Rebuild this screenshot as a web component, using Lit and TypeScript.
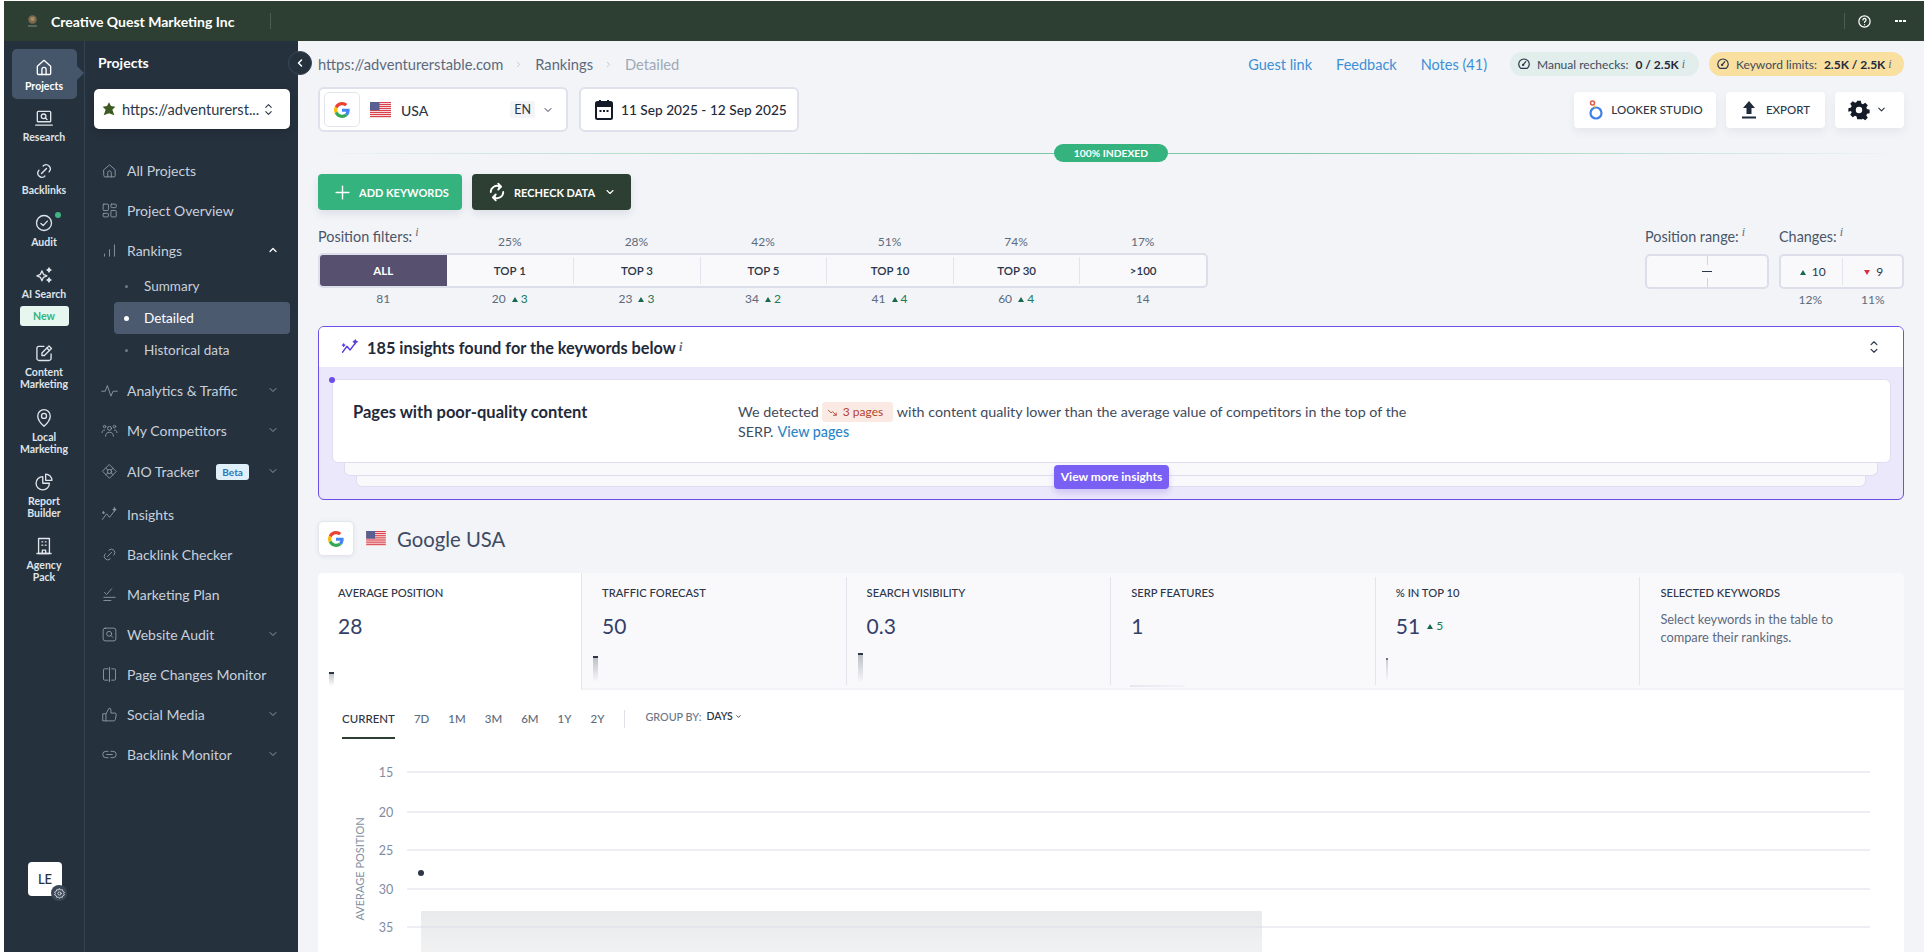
import { LitElement, html, css, svg } from "lit";
import { customElement } from "lit/decorators.js";

const P: Record<string, any> = {
  home: svg`<path d="M4 11l8-7 8 7v8.500a1.500 1.500 0 0 1-1.500 1.500H5.500A1.500 1.500 0 0 1 4 19.500z"/><path d="M9.500 21v-6a2.500 2.500 0 0 1 5 0v6"/>`,
  research: svg`<rect x="4" y="4" width="16" height="12.500" rx="1"/><path d="M2 20.500h20"/><circle cx="11.500" cy="10" r="2.800"/><path d="M13.600 12l2 1.800"/>`,
  link: svg`<path d="M9 15l6-6"/><path d="M11 6l.500-.500a5 5 0 0 1 7 7l-.500.500"/><path d="M13 18l-.400.500a5 5 0 0 1-7-7l.400-.500"/>`,
  audit: svg`<circle cx="12" cy="12" r="9"/><path d="M8.300 12.500l2.700 2.600 5-5.400"/>`,
  spark: svg`<path d="M9.500 7l1.800 4.200L15.500 13l-4.200 1.800L9.500 19l-1.800-4.200L3.500 13l4.200-1.800z"/><path d="M18 3.500l.8 1.700 1.700.8-1.700.8-.8 1.700-.8-1.700-1.700-.8 1.700-.8z" fill="currentColor"/><path d="M18 15.500l.8 1.700 1.700.8-1.700.8-.8 1.700-.8-1.700-1.700-.8 1.700-.8z" fill="currentColor"/>`,
  edit: svg`<path d="M12 4H6a2.500 2.500 0 0 0-2.500 2.500v12A2.500 2.500 0 0 0 6 21h12a2.500 2.500 0 0 0 2.500-2.500V13"/><path d="M9.500 15v-3L18 3.500l3 3L12.500 15z"/><path d="M15.500 6l3 3"/>`,
  pin: svg`<path d="M12 22s-7.500-6.800-7.500-12.500a7.500 7.500 0 0 1 15 0C19.500 15.200 12 22 12 22z"/><circle cx="12" cy="9.500" r="3"/>`,
  pie: svg`<path d="M10.500 5.500a8 8 0 1 0 8 8h-8z"/><path d="M14 2.500v7.500h7.500A7.500 7.500 0 0 0 14 2.500z"/>`,
  building: svg`<rect x="5.500" y="3" width="13" height="18"/><path d="M3.500 21h17"/><path d="M10 21v-4h4v4"/><path d="M9.500 7h1M13.500 7h1M9.500 11h1M13.500 11h1"/>`,
  grid: svg`<rect x="3" y="3" width="7.500" height="9" rx="1"/><rect x="14" y="3" width="7.500" height="5" rx="1"/><rect x="3" y="16" width="7.500" height="5" rx="1"/><rect x="14" y="12" width="7.500" height="9" rx="1"/>`,
  bars: svg`<path d="M5 20v-3M12 20V11M19 20V4"/>`,
  pulse: svg`<path d="M1 13h5l3-8 5 15 3-7h6"/>`,
  users: svg`<circle cx="12" cy="9" r="2.800"/><path d="M6.500 20c0-3.500 2-5.500 5.500-5.500s5.500 2 5.500 5.500"/><circle cx="5" cy="6.500" r="1.800"/><circle cx="19" cy="6.500" r="1.800"/><path d="M1.500 15c0-2.500 1-3.500 3.500-3.500M22.500 15c0-2.500-1-3.500-3.500-3.500"/>`,
  aio: svg`<path d="M12 2.500l9.500 9.500-9.500 9.500L2.500 12z" stroke-linejoin="round"/><circle cx="12" cy="12" r="3"/><path d="M7 7.500l2.800 2.500M17 7.500l-2.800 2.500M7 16.500l2.800-2.500M17 16.500l-2.800-2.500"/>`,
  trend: svg`<path d="M2 19l6-8 4 5 7-9"/><path d="M19 2.500l.7 1.800 1.800.7-1.800.7-.7 1.800-.7-1.800L16.500 5l1.800-.7z" fill="currentColor"/><path d="M3.500 8l.4 1.100 1.100.4-1.100.4-.4 1.100-.4-1.100L2 9.500l1.100-.4z" fill="currentColor"/>`,
  list: svg`<path d="M5 9l3 3 7-8"/><path d="M4 16h16M4 20.500h10"/>`,
  searchbox: svg`<rect x="3" y="3" width="18" height="18" rx="3"/><circle cx="11.500" cy="11" r="3.500"/><path d="M14 13.500l2.500 2.500"/>`,
  split: svg`<path d="M10 4H5a1.500 1.500 0 0 0-1.500 1.500v13A1.500 1.500 0 0 0 5 20h5"/><path d="M12 2v20"/><path d="M15 4h4a1.500 1.500 0 0 1 1.500 1.500v13A1.500 1.500 0 0 1 19 20h-4"/>`,
  thumb: svg`<path d="M3 11h4v10H3z"/><path d="M7 11l4.500-8a2.500 2.500 0 0 1 2.500 2.500V10h5.500a2 2 0 0 1 2 2.300l-1.300 6.700a2.500 2.500 0 0 1-2.500 2H7"/>`,
  chain: svg`<path d="M10 7.500H7a4.500 4.500 0 0 0 0 9h3"/><path d="M14 7.500h3a4.500 4.500 0 0 1 0 9h-3"/><path d="M8 12h8"/>`,
  cog: svg`<circle cx="12" cy="12" r="3"/><path d="M12 3l2 2.500 3.200-.6.800 3.100 3 1.500-1.300 2.500 1.300 2.500-3 1.500-.8 3.100-3.200-.6L12 21l-2-2.500-3.200.6-.8-3.100-3-1.500L4.300 12 3 9.500 6 8l.8-3.100 3.200.6z"/>`,
  gauge: svg`<path d="M6.500 19.500a9 9 0 1 1 11 0z"/><path d="M10.500 13.500L15 8"/><circle cx="10.500" cy="13.500" r="1"/>`,
  down: svg`<path d="M6 9l6 6 6-6"/>`,
  up: svg`<path d="M6 15l6-6 6 6"/>`,
  updown: svg`<path d="M7 8l5-5 5 5M7 16l5 5 5-5"/>`,
  refresh: svg`<path d="M4.500 12a7.500 7.500 0 0 1 11-6.600"/><path d="M19.500 12a7.500 7.500 0 0 1-11 6.600"/><path d="M13.500 2l3.500 3.500-3.500 3.500" fill="currentColor"/><path d="M10.500 22L7 18.500l3.500-3.500" fill="currentColor"/>`,
  plus: svg`<path d="M12 3v18M3 12h18"/>`,
  help: svg`<circle cx="12" cy="12" r="9"/><path d="M9.500 9.500a2.500 2.500 0 1 1 3.800 2.200c-.8.500-1.300 1-1.300 1.800"/><path d="M12 17v.1"/>`,
  declin: svg`<path d="M3 7l6 6 3-3 8 8"/><path d="M14 18h6v-5"/>`,
};

const ic = (n: string, cls = "") =>
  html`<svg class="ic ${cls}" viewBox="0 0 24 24" fill="none" stroke="currentColor" stroke-linecap="round" stroke-linejoin="round">${P[n]}</svg>`;

const gLogo = html`<svg class="g" viewBox="0 0 48 48"><path fill="#EA4335" d="M24 9.500c3.540 0 6.710 1.220 9.210 3.600l6.850-6.850C35.900 2.380 30.470 0 24 0 14.620 0 6.510 5.380 2.560 13.220l7.980 6.190C12.430 13.720 17.740 9.500 24 9.500z"/><path fill="#4285F4" d="M46.980 24.550c0-1.570-.15-3.090-.38-4.550H24v9.020h12.940c-.58 2.960-2.260 5.480-4.780 7.180l7.730 6c4.510-4.180 7.090-10.360 7.090-17.650z"/><path fill="#FBBC05" d="M10.530 28.590c-.48-1.450-.76-2.990-.76-4.590s.27-3.140.76-4.590l-7.980-6.190C.92 16.460 0 20.120 0 24c0 3.880.92 7.540 2.560 10.780l7.970-6.190z"/><path fill="#34A853" d="M24 48c6.480 0 11.930-2.130 15.890-5.810l-7.730-6c-2.150 1.450-4.920 2.300-8.160 2.300-6.260 0-11.570-4.220-13.470-9.910l-7.980 6.190C6.510 42.620 14.620 48 24 48z"/></svg>`;

const flag = html`<svg class="flag" viewBox="0 0 21 16"><rect width="21" height="16" fill="#fff"/>${[0, 2, 4, 6, 8, 10, 12, 14].map((y) => svg`<rect y="${y}" width="21" height="1.200" fill="#d9424b"/>`)}<rect width="9.500" height="8.200" fill="#5a5f91"/></svg>`;

const rail = [
  { icon: "home", lines: ["Projects"], active: true },
  { icon: "research", lines: ["Research"] },
  { icon: "link", lines: ["Backlinks"] },
  { icon: "audit", lines: ["Audit"], dot: true },
  { icon: "spark", lines: ["AI Search"], badge: "New" },
  { icon: "edit", lines: ["Content", "Marketing"] },
  { icon: "pin", lines: ["Local", "Marketing"] },
  { icon: "pie", lines: ["Report", "Builder"] },
  { icon: "building", lines: ["Agency", "Pack"] },
];

const menu = [
  { icon: "home", label: "All Projects" },
  { icon: "grid", label: "Project Overview" },
  { icon: "bars", label: "Rankings", chev: "up" },
  { sub: "Summary" },
  { sub: "Detailed", active: true },
  { sub: "Historical data", cls: "last" },
  { icon: "pulse", label: "Analytics & Traffic", chev: "down" },
  { icon: "users", label: "My Competitors", chev: "down" },
  { icon: "aio", label: "AIO Tracker", chev: "down", beta: true, cls: "tall" },
  { icon: "trend", label: "Insights" },
  { icon: "link", label: "Backlink Checker" },
  { icon: "list", label: "Marketing Plan" },
  { icon: "searchbox", label: "Website Audit", chev: "down" },
  { icon: "split", label: "Page Changes Monitor" },
  { icon: "thumb", label: "Social Media", chev: "down" },
  { icon: "chain", label: "Backlink Monitor", chev: "down" },
];

const filters = [
  { l: "ALL", p: "", c: "81", d: "" },
  { l: "TOP 1", p: "25%", c: "20", d: "3" },
  { l: "TOP 3", p: "28%", c: "23", d: "3" },
  { l: "TOP 5", p: "42%", c: "34", d: "2" },
  { l: "TOP 10", p: "51%", c: "41", d: "4" },
  { l: "TOP 30", p: "74%", c: "60", d: "4" },
  { l: ">100", p: "17%", c: "14", d: "" },
];

const tabs = [
  { l: "AVERAGE POSITION", v: "28", s: { x: 11, y: 99, h: 14 }, on: true },
  { l: "TRAFFIC FORECAST", v: "50", s: { x: 12, y: 83, h: 26 } },
  { l: "SEARCH VISIBILITY", v: "0.3", s: { x: 12, y: 80, h: 30 } },
  { l: "SERP FEATURES", v: "1", faint: true },
  { l: "% IN TOP 10", v: "51", d: "5", s: { x: 11, y: 85, h: 24, thin: true } },
];

const tri = (up = true) => html`<span class="tri ${up ? "up" : "dn"}"></span>`;

@customElement("app-root")
export class AppRoot extends LitElement {
  static styles = css`
    :host { display: block; width: 1924px; height: 952px; overflow: hidden; background: #fff; padding: 1px 0 0 4px; box-sizing: border-box; font-family: "Lato", sans-serif; color: #2b3648; }
    * { box-sizing: border-box; }
    .ic { width: 16px; height: 16px; stroke-width: 1.500; flex: none; display: block; }
    .top { height: 40px; background: #2d3f33; display: flex; align-items: center; color: #fff; padding-left: 23px; }
    .logo { width: 11px; height: 13px; margin-right: 13px; flex: none; }
    .company { font-size: 14px; font-weight: 700; width: 219px; white-space: nowrap; }
    .vline { width: 1px; height: 16px; background: #4c5d52; }
    .top .sp { flex: 1; }
    .helpwrap { margin-left: 12px; }
    .top .ic { width: 15px; height: 15px; color: #fff; stroke-width: 2; }
    .dots { display: flex; gap: 1px; margin: 0 18px 0 23px; }
    .dots i { width: 3px; height: 2px; background: #fff; }
    .body { display: flex; height: 911px; position: relative; }
    .rail { width: 81px; background: #26313e; border-right: 1px solid #364352; display: flex; flex-direction: column; align-items: center; padding: 8px 0 0; gap: 17.300px; position: relative; color: #dfe4ea; }
    .ri { width: 65px; display: flex; flex-direction: column; align-items: center; font-size: 10.500px; line-height: 12px; font-weight: 700; position: relative; text-align: center; }
    .ri .ic { width: 20px; height: 20px; margin-bottom: 3px; stroke-width: 1.600; }
    .ri.on { background: #46566a; height: 50px; padding-top: 8px; margin-bottom: -8px; color: #fff; border-radius: 5px; }
    .ri.on::after { content: ""; position: absolute; right: -5px; top: 19px; width: 10px; height: 10px; background: #46566a; transform: rotate(45deg); border-radius: 1px; }
    .ri .gd { position: absolute; left: 43px; top: -1px; width: 6px; height: 6px; border-radius: 50%; background: #3fb583; }
    .new { width: 49px; height: 20px; border-radius: 3px; background: #e5f7ee; color: #35b37e; font-size: 10.500px; font-weight: 700; line-height: 20px; margin-top: 6px; }
    .avatar { position: absolute; left: 24px; top: 821px; width: 34px; height: 34px; border-radius: 4px; background: #fff; color: #26313e; font-size: 13px; font-weight: 500; display: flex; align-items: center; justify-content: center; }
    .avatar .gear { position: absolute; right: -5px; bottom: -5px; width: 16px; height: 16px; border-radius: 50%; background: #3a4757; color: #e6e9ee; display: flex; align-items: center; justify-content: center; }
    .avatar .gear .ic { width: 13px; height: 13px; }
    .side { width: 213px; background: #26313e; padding: 0 8px 0 9px; position: relative; color: #c7d0db; }
    .side h3 { margin: 14px 0 0 4px; font-size: 14px; font-weight: 700; color: #fff; line-height: 16px; }
    .proj { margin-top: 18px; height: 40px; background: #fff; border-radius: 5px; display: flex; align-items: center; padding-left: 7px; color: #2b3648; font-size: 14.600px; box-shadow: 0 3px 8px rgba(0,0,0,.15); white-space: nowrap; }
    .proj .st { width: 16px; height: 16px; fill: #3c5a22; margin-right: 5px; flex: none; }
    .proj .ic { width: 13px; height: 13px; margin-left: 3px; stroke-width: 2; }
    .menu { margin-top: 21px; }
    .mi { height: 40px; display: flex; align-items: center; font-size: 14px; padding: 0 0 0 7px; }
    .mi.tall { height: 42px; margin-bottom: 2px; }
    .mi .ic { width: 17px; height: 17px; margin-right: 9px; color: #8c99a8; stroke-width: 1.300; }
    .mi .lb { flex: 1; white-space: nowrap; }
    .mi .chev { width: 12px; height: 12px; margin: 0 11px 0 0; stroke-width: 2; }
    .mi .chev.up { color: #fff; stroke-width: 2.500; }
    .beta { display: inline-block; font-size: 10px; font-weight: 700; height: 16px; line-height: 16px; padding: 0 6px; margin-left: 17px; background: #dff0fb; color: #2a77b8; border-radius: 3px; vertical-align: 1px; }
    .sb { height: 32px; width: 176px; margin-left: 20px; padding-left: 4px; display: flex; align-items: center; font-size: 13.500px; border-radius: 4px; }
    .sb.last { margin-bottom: 4px; }
    .sb i { width: 3px; height: 3px; border-radius: 50%; background: #6d7a89; margin: 0 16px 0 7px; flex: none; }
    .sb.on { background: #4b5a6e; color: #fff; }
    .sb.on i { background: #fff; width: 5px; height: 5px; margin: 0 15px 0 6px; }
    .collapse { position: absolute; left: 284px; top: 10px; width: 24px; height: 24px; border-radius: 50%; background: #26313e; border: 1px solid #3b4858; color: #fff; display: flex; align-items: center; justify-content: center; z-index: 3; }
    .collapse .ic { width: 12px; height: 12px; stroke-width: 3; transform: rotate(90deg); }

    .main { flex: 1; min-width: 0; background: #f2f4f8; padding: 11px 20px 0; overflow: hidden; }
    .row1 { display: flex; align-items: center; height: 24px; font-size: 14.700px; }
    .crumb { color: #5d6a7c; }
    .crumb.last { color: #a0a8b5; }
    .gt { width: 9px; height: 9px; margin: 0 12px 0 11px; color: #a0a8b5; transform: rotate(-90deg); }
    .sp { flex: 1; }
    .lnk { color: #3d8fd6; margin-left: 24px; font-size: 14.500px; }
    .pill { height: 24px; border-radius: 12px; display: flex; align-items: center; font-size: 12px; padding: 0 7px; color: #3f4b5c; margin-left: 10px; white-space: nowrap; }
    .pill.m { width: 189px; background: #e2eeec; margin-left: 23px; }
    .pill.k { width: 195px; background: #f9dfa0; }
    .pill .ic { width: 14px; height: 14px; margin-right: 6px; color: #2b3648; stroke-width: 2; }
    .pill b { font-weight: 700; color: #1f2a3a; margin-left: 7px; }
    sup.i { font-family: "Liberation Serif", serif; font-style: italic; font-size: 12px; color: #5d6a7c; line-height: 0; margin-left: 3px; vertical-align: 6px; }
    .row2 { display: flex; align-items: center; margin-top: 11px; height: 45px; }
    .sel { height: 45px; background: #fff; border: 2px solid #dfe1ec; border-radius: 6px; display: flex; align-items: center; font-size: 14px; }
    .sel.eng { width: 250px; padding-left: 4px; }
    .gbox { width: 36px; height: 35px; border: 1px solid #e4e6ee; border-radius: 5px; background: #fff; display: flex; align-items: center; justify-content: center; flex: none; }
    .g { width: 16px; height: 16px; }
    .flag { width: 21px; height: 16px; flex: none; }
    .sel .flag { margin-left: 10px; }
    .sel .usa { margin-left: 10px; flex: 1; font-weight: 500; padding-top: 1px; }
    .en { font-size: 12.500px; background: #f2f4f8; padding: 0 4px; height: 17px; line-height: 17px; border-radius: 2px; }
    .sel .down { width: 12px; height: 12px; margin: 0 12px 0 7px; stroke-width: 2; }
    .sel.date { width: 220px; margin-left: 11px; padding-left: 14px; white-space: nowrap; font-size: 13.700px; font-weight: 500; color: #1f2a3a; }
    .sel.date svg { width: 18px; height: 21px; margin-right: 8px; flex: none; }
    .wbtn { height: 36px; background: #fff; border-radius: 4px; display: flex; align-items: center; justify-content: center; font-size: 11.500px; font-weight: 500; box-shadow: 0 4px 8px rgba(40,50,80,.07); margin-left: 10px; color: #2b3648; }
    .wbtn.lk { width: 142px; }
    .wbtn.ex { width: 99px; }
    .wbtn.gr { width: 69px; padding-right: 4px; }
    .wbtn .lkic { width: 16px; height: 24px; margin-right: 8px; }
    .wbtn .exic { width: 16px; height: 20px; margin-right: 9px; }
    .wbtn .gic { width: 22px; height: 22px; fill: #141a26; margin-right: 6px; }
    .wbtn .down { width: 11px; height: 11px; stroke-width: 2.200; color: #1f2a3a; }
    .idx { margin-top: 12px; height: 18px; position: relative; display: flex; align-items: center; justify-content: center; }
    .idx .ln { position: absolute; left: 0; right: 0; top: 9px; height: 1px; background: linear-gradient(90deg, transparent 0%, #7cc6a4 40%, #7cc6a4 60%, transparent 100%); }
    .idx span { position: relative; width: 114px; height: 18px; border-radius: 9px; background: #35b37e; color: #fff; font-size: 10.300px; font-weight: 700; text-align: center; line-height: 18px; }
    .acts { display: flex; margin-top: 12px; gap: 10px; }
    .btn { height: 36px; border-radius: 4px; color: #fff; font-size: 11px; font-weight: 700; display: flex; align-items: center; white-space: nowrap; box-shadow: 0 4px 8px rgba(40,50,80,.1); }
    .btn.gr { width: 144px; background: #35b37e; padding-left: 16px; }
    .btn.gr .ic { width: 17px; height: 17px; margin-right: 8px; stroke-width: 2; }
    .btn.dk { width: 159px; background: #2d3f33; padding-left: 15px; }
    .btn.dk .r { width: 20px; height: 22px; margin-right: 7px; stroke-width: 2.200; }
    .btn.dk .d { width: 12px; height: 12px; margin-left: 9px; stroke-width: 2.200; }
    .fl { display: flex; margin-top: 19px; }
    .fl .a { width: 890px; }
    .gr7 { display: grid; grid-template-columns: repeat(7, 1fr); padding: 0 2px; text-align: center; }
    .lab { font-size: 14.400px; color: #4a5668; white-space: nowrap; }
    .ph { height: 24px; align-items: end; font-size: 12px; color: #5d6a7c; line-height: 18px; padding-bottom: 2px; }
    .ph .lab { text-align: left; margin: 1px 0 0 -2px; align-self: start; line-height: 14px; }
    .seg { height: 35px; border: 2px solid #dcdeea; border-radius: 5px; background: #f9f9fc; padding: 0; font-size: 11.500px; font-weight: 600; color: #2b3648; align-items: center; }
    .seg > div { height: 27px; line-height: 27px; border-left: 1px solid #e3e5ec; }
    .seg > div:first-child { height: 31px; line-height: 31px; background: #57506f; color: #fff; border: 0; border-radius: 3px 0 0 3px; font-weight: 700; }
    .seg > div:nth-child(2) { border: 0; }
    .cnt { font-size: 12px; color: #5d6a7c; line-height: 14px; margin-top: 4px; }
    .cnt em { font-style: normal; color: #177a58; }
    .tri { display: inline-block; width: 0; height: 0; border-left: 3.500px solid transparent; border-right: 3.500px solid transparent; margin: 0 3px 1px 3px; }
    .tri.up { border-bottom: 5px solid #17684c; }
    .tri.dn { border-top: 5px solid #d8303f; }
    .fl .b { margin-left: auto; width: 124px; margin-right: 10px; }
    .fl .c { width: 125px; }
    .fl .hd { height: 24px; }
    .fl .hd .lab { line-height: 14px; display: block; margin-top: 1px; }
    .bx { height: 35px; border: 2px solid #dcdeea; border-radius: 5px; background: #f9f9fc; position: relative; display: flex; align-items: center; justify-content: center; font-size: 12px; color: #2b3648; }
    .bx .dash { width: 10px; height: 1px; background: #2b3648; }
    .bx .tk { position: absolute; left: 60px; width: 1px; height: 9px; background: #d0d3df; }
    .bx .t1 { top: 0; }
    .bx .t2 { bottom: 0; }
    .chg { display: grid; grid-template-columns: 1fr 1fr; }
    .chg > div { height: 27px; line-height: 27px; text-align: center; }
    .chg > div + div { border-left: 1px solid #e3e5ec; }
    .chg .tri { margin-right: 6px; }
    .chg2 { display: grid; grid-template-columns: 1fr 1fr; text-align: center; font-size: 12px; color: #5d6a7c; line-height: 14px; margin-top: 4px; }
    .ins { margin-top: 19px; height: 174px; border: 1px solid #6b4fe6; border-radius: 6px; background: #ece8fb; position: relative; overflow: hidden; }
    .ihead { height: 40px; background: #fff; display: flex; align-items: center; padding-left: 22px; font-size: 16.300px; font-weight: 700; color: #1f2a3a; }
    .ihead .trend { width: 18px; height: 18px; color: #5b3fe0; margin-right: 8px; stroke-width: 1.800; }
    .ihead .ud { width: 14px; height: 14px; color: #2b3648; margin-right: 22px; stroke-width: 2; }
    .card { position: relative; margin: 12px 12px 0 13px; height: 84px; background: #fff; border: 1px solid #e0ddf2; border-radius: 6px; display: flex; padding-top: 22px; z-index: 2; }
    .card .t { width: 405px; padding-left: 20px; font-size: 16.500px; font-weight: 700; color: #1f2a3a; line-height: 20px; flex: none; }
    .card .d { width: 700px; font-size: 14.300px; line-height: 20px; color: #3f4b5c; }
    .dl1 { display: flex; align-items: center; height: 20px; white-space: nowrap; }
    .dl2 { white-space: nowrap; height: 20px; display: flex; gap: 4px; }
    .page { display: flex; align-items: center; background: #fbe9e3; color: #b4442d; height: 20px; padding: 0 5px; border-radius: 3px; margin: 0 4px 0 3px; font-size: 12px; width: 71px; }
    .page .ic { width: 11px; height: 11px; margin-right: 5px; stroke-width: 2; }
    .dot { position: absolute; left: 10px; top: 50px; width: 6px; height: 6px; border-radius: 50%; background: #6b4fe6; z-index: 3; }
    .view { color: #2d86c8; font-weight: 500; }
    .stack { position: absolute; background: #f9f9fc; border: 1px solid #e0ddf2; border-top: 0; border-radius: 0 0 6px 6px; height: 14px; }
    .s1 { left: 25px; right: 25px; top: 135px; z-index: 1; }
    .s2 { left: 37px; right: 37px; top: 146px; z-index: 0; height: 14px; }
    .more { position: absolute; left: 735px; top: 138px; width: 115px; height: 24px; background: #7a5ff5; border-radius: 4px; color: #fff; font-size: 12px; font-weight: 700; text-align: center; line-height: 24px; z-index: 3; box-shadow: 0 4px 6px rgba(90,60,230,.2); }
    .gu { margin-top: 20px; display: flex; align-items: center; height: 37px; font-size: 20.300px; color: #3f4b63; }
    .gu .gbox { box-shadow: 0 1px 4px rgba(40,50,80,.08); }
    .gu .flag { margin: 0 10px 0 11px; width: 22px; height: 15px; }
    .panel { margin-top: 16px; background: #fff; border-radius: 5px 5px 0 0; height: 400px; position: relative; }
    .tabs { display: grid; grid-template-columns: 263px repeat(5, 1fr); height: 117px; background: #f9f9fc; border-radius: 5px 5px 0 0; }
    .tb { padding: 13px 0 0 21px; position: relative; font-size: 11.200px; font-weight: 500; color: #2b3648; border-bottom: 2px solid #f2f3f7; }
    .tb.on { background: #fff; border-radius: 5px 0 0 0; border-bottom-color: #fff; padding-left: 20px; }
    .tb + .tb::before { content: ""; position: absolute; left: 0; top: 4px; bottom: 3px; width: 1px; background: #e3e5ec; }
    .tb.on + .tb::before { top: 0; bottom: -2px; }
    .tb .v { font-size: 21px; color: #343f68; font-weight: 400; margin-top: 13px; line-height: 28px; display: flex; align-items: center; }
    .tb .v .dl { font-size: 12px; color: #177a58; margin-left: 4px; }
    .tb .txt { font-size: 12.800px; font-weight: 400; color: #5d6a7c; margin-top: 11px; line-height: 18px; width: 200px; }
    .spk { position: absolute; width: 5px; background: linear-gradient(#b8bcc2, rgba(184,188,194,0)); }
    .spk::before { content: ""; position: absolute; left: 0; right: 0; top: 0; height: 2px; background: #2b3648; }
    .spk.thin { width: 2px; background: linear-gradient(#c8ccd2, rgba(200,204,210,0)); }
    .spk.thin::before { background: #6b7685; }
    .faint { position: absolute; left: 20px; bottom: 1px; width: 55px; height: 2px; background: linear-gradient(90deg, #e6e8ee, #f2f3f7); }
    .ranges { display: flex; align-items: center; height: 49px; margin: 0 0 0 24px; font-size: 11.500px; color: #5d6a7c; font-weight: 500; }
    .rg { height: 49px; line-height: 58px; margin-right: 19px; position: relative; }
    .rg.on { color: #2b3648; }
    .rg.on::after { content: ""; position: absolute; left: 0; right: 0; bottom: 0; height: 2px; background: #2d3f33; }
    .rsep { width: 1px; height: 18px; background: #dfe1ea; margin: 9px 20px 0 1px; }
    .grp { margin-top: 3px; color: #6a7687; white-space: nowrap; display: flex; align-items: center; font-size: 10.800px; }
    .grp b { color: #2b3648; font-weight: 600; margin-left: 5px; font-size: 10.500px; }
    .grp .ic { width: 7px; height: 7px; stroke-width: 3; color: #2b3648; margin-left: 2px; }
    .chart { display: block; width: 1586px; height: 240px; font-family: "Lato", sans-serif; }
  `;

  render() {
    return html`
      <div class="top">
        <svg class="logo" viewBox="0 0 11 13"><circle cx="5.500" cy="4.500" r="4.200" fill="#7d6a4d"/><circle cx="5.500" cy="4" r="2" fill="#a68f63"/><rect x="1" y="10" width="9" height="2" fill="#5a665c"/></svg>
        <span class="company">Creative Quest Marketing Inc</span>
        <span class="vline"></span>
        <span class="sp"></span>
        <span class="vline"></span>
        <span class="helpwrap">${ic("help")}</span>
        <span class="dots"><i></i><i></i><i></i></span>
      </div>
      <div class="body">
        <nav class="rail">
          ${rail.map(
            (r) => html`<div class="ri ${r.active ? "on" : ""}">
              ${ic(r.icon)}${r.dot ? html`<span class="gd"></span>` : ""}
              ${r.lines.map((l) => html`<div>${l}</div>`)}
              ${r.badge ? html`<div class="new">${r.badge}</div>` : ""}
            </div>`
          )}
          <div class="avatar">LE<span class="gear">${ic("cog")}</span></div>
        </nav>
        <aside class="side">
          <h3>Projects</h3>
          <div class="proj">
            <svg class="st" viewBox="0 0 24 24"><path d="M12 2l3 5.500 6.500 1-4.500 4.500 3 8.500-8-3-8 3 3-8.500L2.500 8.500l6.500-1z"/></svg>
            <span>https://adventurerst...</span>${ic("updown")}
          </div>
          <div class="menu">
            ${menu.map((m: any) =>
              m.sub
                ? html`<div class="sb ${m.active ? "on" : ""} ${m.cls || ""}"><i></i>${m.sub}</div>`
                : html`<div class="mi ${m.cls || ""}">
                    ${ic(m.icon)}
                    <span class="lb">${m.label}${m.beta ? html`<span class="beta">Beta</span>` : ""}</span>
                    ${m.chev ? ic(m.chev, "chev " + m.chev) : ""}
                  </div>`
            )}
          </div>
        </aside>
        <div class="collapse">${ic("down")}</div>
        <main class="main">
          <div class="row1">
            <span class="crumb">https://adventurerstable.com</span>${ic("down", "gt")}
            <span class="crumb">Rankings</span>${ic("down", "gt")}
            <span class="crumb last">Detailed</span>
            <span class="sp"></span>
            <span class="lnk">Guest link</span><span class="lnk">Feedback</span><span class="lnk">Notes (41)</span>
            <span class="pill m">${ic("gauge")}Manual rechecks: <b>0 / 2.5K</b><sup class="i">i</sup></span>
            <span class="pill k">${ic("gauge")}Keyword limits: <b>2.5K / 2.5K</b><sup class="i">i</sup></span>
          </div>
          <div class="row2">
            <div class="sel eng">
              <span class="gbox">${gLogo}</span>${flag}<span class="usa">USA</span><span class="en">EN</span>${ic("down", "down")}
            </div>
            <div class="sel date">
              <svg viewBox="0 0 18 21"><rect x="1" y="3" width="16" height="17" rx="1.500" fill="none" stroke="#141a26" stroke-width="2"/><rect x="1" y="3" width="16" height="5" fill="#141a26"/><path d="M5 1v4M13 1v4" stroke="#141a26" stroke-width="2"/><path d="M4.500 11h2v2h-2zM8 11h2v2H8zM11.500 11h2v2h-2z" fill="#141a26"/></svg>
              11 Sep 2025 - 12 Sep 2025
            </div>
            <span class="sp"></span>
            <div class="wbtn lk">
              <svg class="lkic" viewBox="0 0 16 24"><circle cx="9" cy="15" r="5.500" fill="none" stroke="#3f7fe8" stroke-width="2.200"/><circle cx="5.500" cy="5" r="2" fill="none" stroke="#e2574c" stroke-width="1.500"/><path d="M7 7.500l1 2" stroke="#f0b93a" stroke-width="1.500"/></svg>
              LOOKER STUDIO
            </div>
            <div class="wbtn ex">
              <svg class="exic" viewBox="0 0 16 20"><path d="M8 1l6 7h-3.500v6h-5V8H2z" fill="#1f2a3a"/><rect x="1" y="16.500" width="14" height="2" fill="#1f2a3a"/></svg>
              EXPORT
            </div>
            <div class="wbtn gr">
              <svg class="gic" viewBox="0 0 24 24"><path fill-rule="evenodd" d="M10 2h4l.6 2.900 1.700.7 2.500-1.600 2.800 2.800-1.600 2.500.7 1.700 2.900.6v4l-2.900.6-.7 1.700 1.600 2.500-2.800 2.800-2.500-1.600-1.700.7L14 22h-4l-.6-2.900-1.700-.7-2.500 1.600-2.800-2.800 1.600-2.500-.7-1.700L.4 14v-4l2.900-.6.7-1.700L2.400 5.200l2.800-2.800 2.500 1.600 1.700-.7zM12 8.500a3.500 3.500 0 1 0 0 7 3.500 3.500 0 0 0 0-7z"/></svg>
              ${ic("down", "down")}
            </div>
          </div>
          <div class="idx"><div class="ln"></div><span>100% INDEXED</span></div>
          <div class="acts">
            <div class="btn gr">${ic("plus")}ADD KEYWORDS</div>
            <div class="btn dk">${ic("refresh", "r")}RECHECK DATA${ic("down", "d")}</div>
          </div>
          <div class="fl">
            <div class="a">
              <div class="gr7 ph">
                ${filters.map((f, i) =>
                  i === 0
                    ? html`<div class="lab">Position filters:<sup class="i">i</sup></div>`
                    : html`<div>${f.p}</div>`
                )}
              </div>
              <div class="gr7 seg">${filters.map((f) => html`<div>${f.l}</div>`)}</div>
              <div class="gr7 cnt">
                ${filters.map((f) => html`<div>${f.c}${f.d ? html` ${tri()}<em>${f.d}</em>` : ""}</div>`)}
              </div>
            </div>
            <div class="b">
              <div class="hd"><span class="lab">Position range:<sup class="i">i</sup></span></div>
              <div class="bx"><span class="tk t1"></span><span class="dash"></span><span class="tk t2"></span></div>
            </div>
            <div class="c">
              <div class="hd"><span class="lab">Changes:<sup class="i">i</sup></span></div>
              <div class="bx chg"><div>${tri()}10</div><div>${tri(false)}9</div></div>
              <div class="chg2"><div>12%</div><div>11%</div></div>
            </div>
          </div>
          <section class="ins">
            <div class="ihead">
              ${ic("trend", "trend")}<span>185 insights found for the keywords below</span><sup class="i">i</sup>
              <span class="sp"></span>${ic("updown", "ud")}
            </div>
            <span class="dot"></span>
            <div class="card">
              <div class="t">Pages with poor-quality content</div>
              <div class="d">
                <div class="dl1"><span>We detected</span><span class="page">${ic("declin")}3 pages</span><span>with content quality lower than the average value of competitors in the top of the</span></div>
                <div class="dl2"><span>SERP.</span><span class="view">View pages</span></div>
              </div>
            </div>
            <div class="stack s1"></div>
            <div class="stack s2"></div>
            <div class="more">View more insights</div>
          </section>
          <div class="gu"><span class="gbox">${gLogo}</span>${flag}Google USA</div>
          <section class="panel">
            <div class="tabs">
              ${tabs.map(
                (t: any) => html`<div class="tb ${t.on ? "on" : ""}">
                  ${t.l}
                  <div class="v">${t.v}${t.d ? html`<span class="dl">${tri()}${t.d}</span>` : ""}</div>
                  ${t.s ? html`<span class="spk ${t.s.thin ? "thin" : ""}" style="left:${t.s.x}px;top:${t.s.y}px;height:${t.s.h}px"></span>` : ""}
                  ${t.faint ? html`<span class="faint"></span>` : ""}
                </div>`
              )}
              <div class="tb">SELECTED KEYWORDS<div class="txt">Select keywords in the table to compare their rankings.</div></div>
            </div>
            <div class="ranges">
              <span class="rg on">CURRENT</span><span class="rg">7D</span><span class="rg">1M</span><span class="rg">3M</span><span class="rg">6M</span><span class="rg">1Y</span><span class="rg">2Y</span>
              <span class="rsep"></span>
              <span class="grp">GROUP BY: <b>DAYS</b> ${ic("down")}</span>
            </div>
            <svg class="chart" viewBox="0 0 1586 240">
              <defs><linearGradient id="gf" x1="0" y1="0" x2="0" y2="1"><stop offset="0" stop-color="#e9eaeb"/><stop offset="1" stop-color="#f6f6f7"/></linearGradient></defs>
              <rect x="103" y="172" width="841" height="68" fill="url(#gf)"/>
              ${[33, 73, 111, 150, 188].map((y, i) => svg`
                <line x1="89" x2="1552" y1="${y}" y2="${y}" stroke="#dcdeea"/>
                <text x="68" y="${y + 5}" text-anchor="middle" font-size="12.500" fill="#7f8ca0">${15 + i * 5}</text>
              `)}
              <text transform="translate(46 130) rotate(-90)" text-anchor="middle" font-size="11" fill="#8390a3">AVERAGE POSITION</text>
              <circle cx="103" cy="134" r="3" fill="#2b3648"/>
            </svg>
          </section>
        </main>
      </div>
    `;
  }
}
